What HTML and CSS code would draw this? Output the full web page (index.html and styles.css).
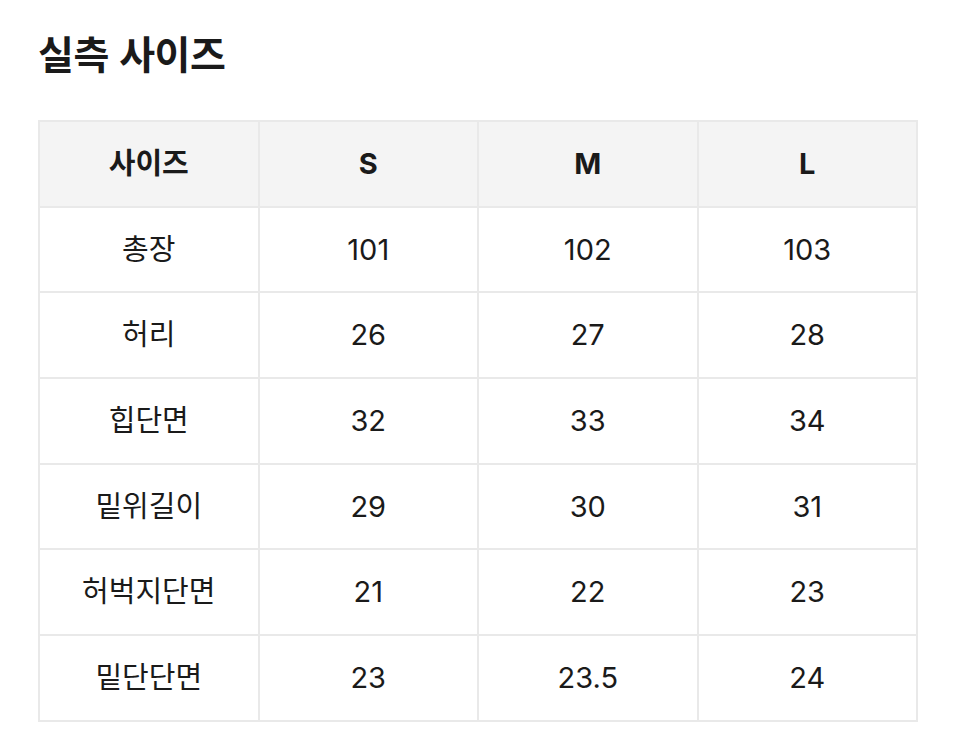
FILE: index.html
```html
<!DOCTYPE html>
<html lang="ko">
<head>
<meta charset="utf-8">
<title>실측 사이즈</title>
<link rel="stylesheet" href="styles.css">
</head>
<body>
<main class="page">
  <h1 class="title">실측 사이즈</h1>
  <table class="size-table">
    <thead>
      <tr><th>사이즈</th><th>S</th><th>M</th><th>L</th></tr>
    </thead>
    <tbody>
      <tr><td>총장</td><td>101</td><td>102</td><td>103</td></tr>
      <tr><td>허리</td><td>26</td><td>27</td><td>28</td></tr>
      <tr><td>힙단면</td><td>32</td><td>33</td><td>34</td></tr>
      <tr><td>밑위길이</td><td>29</td><td>30</td><td>31</td></tr>
      <tr><td>허벅지단면</td><td>21</td><td>22</td><td>23</td></tr>
      <tr><td>밑단단면</td><td>23</td><td>23.5</td><td>24</td></tr>
    </tbody>
  </table>
</main>
</body>
</html>
```

FILE: styles.css
```css
html, body {
  margin: 0;
  padding: 0;
  background: #ffffff;
}
body {
  font-family: Inter, "Noto Sans CJK KR", sans-serif;
  color: #1a1a1a;
}
.page {
  padding: 26px 38px 0 38px;
}
.title {
  margin: 0 0 42px 0;
  font-family: "Noto Sans CJK KR", sans-serif;
  font-size: 39px;
  font-weight: 700;
  line-height: 52px;
  letter-spacing: -0.5px;
  color: #1a1a1a;
}
.size-table {
  width: 880px;
  table-layout: fixed;
  border-collapse: collapse;
  border: 2px solid #e9e9e9;
}
.size-table th,
.size-table td {
  border: 2px solid #e9e9e9;
  height: 83.7px;
  padding: 0;
  text-align: center;
  vertical-align: middle;
  font-size: 29px;
  line-height: 32px;
}
.size-table th {
  background: #f4f4f4;
  font-weight: 700;
}
.size-table td {
  font-weight: 400;
}
```
